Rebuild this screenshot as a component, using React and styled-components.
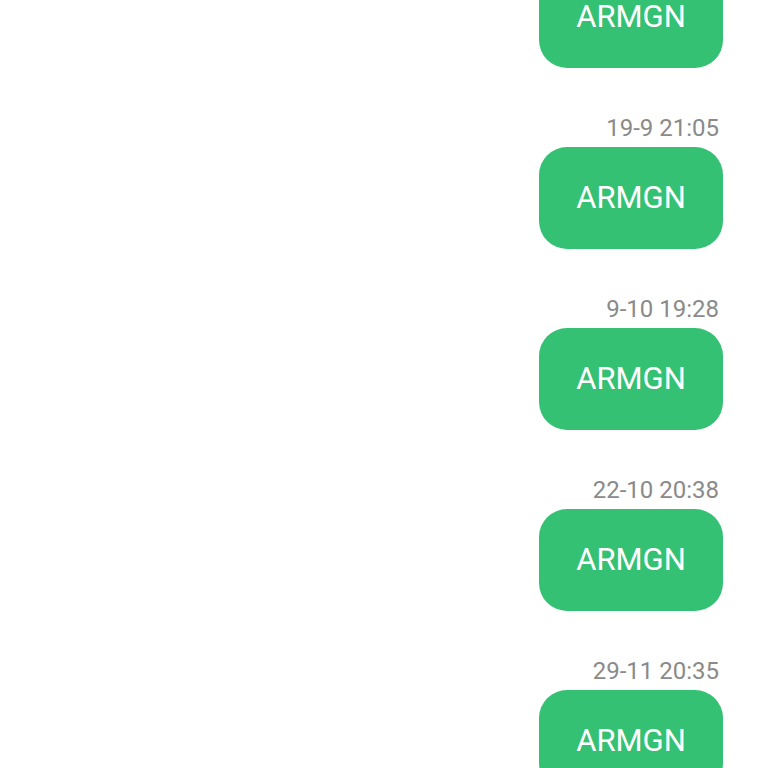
import React from "react";
import styled, { createGlobalStyle } from "styled-components";

const Global = createGlobalStyle`
  html, body { margin: 0; padding: 0; background: #ffffff; overflow: hidden; }
  body { font-family: Roboto, "Noto Sans", "Liberation Sans", sans-serif; }
`;

const Thread = styled.div`
  display: flex;
  flex-direction: column;
  align-items: flex-end;
  gap: 46px;
  padding-right: 45px;
  margin-top: -67px;
`;

const Message = styled.div`
  display: flex;
  flex-direction: column;
  align-items: flex-end;
  gap: 5px;
`;

const Time = styled.div`
  font-size: 24px;
  line-height: 28px;
  color: #8a8a8a;
  padding-right: 4px;
`;

const Bubble = styled.div`
  width: 184px;
  height: 102px;
  box-sizing: border-box;
  border-radius: 28px;
  background: #35c173;
  color: #ffffff;
  font-size: 31px;
  display: flex;
  align-items: center;
  justify-content: center;
  padding-bottom: 2px;
`;

const messages = [
  { time: "7-9 20:14", text: "ARMGN" },
  { time: "19-9 21:05", text: "ARMGN" },
  { time: "9-10 19:28", text: "ARMGN" },
  { time: "22-10 20:38", text: "ARMGN" },
  { time: "29-11 20:35", text: "ARMGN" },
];

export default function App() {
  return (
    <>
      <Global />
      <Thread>
        {messages.map((m, i) => (
          <Message key={i}>
            <Time>{m.time}</Time>
            <Bubble>{m.text}</Bubble>
          </Message>
        ))}
      </Thread>
    </>
  );
}
